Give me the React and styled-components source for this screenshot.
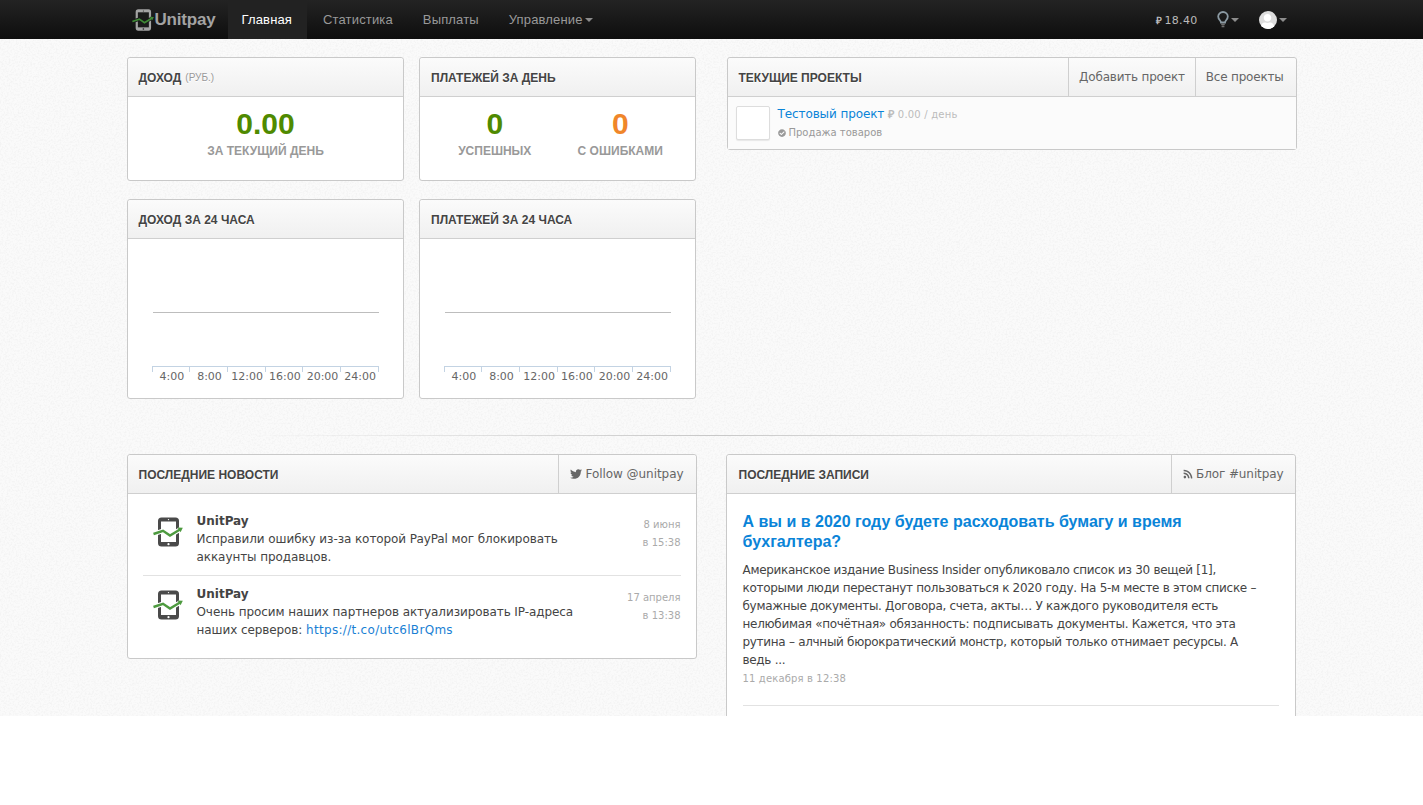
import React from "react";
import styled, { createGlobalStyle } from "styled-components";
import { FaTwitter, FaRss, FaCheckCircle, FaUser } from "react-icons/fa";

const noise = encodeURIComponent(
  `<svg xmlns="http://www.w3.org/2000/svg" width="256" height="256"><filter id="n" x="0" y="0" width="100%" height="100%"><feTurbulence type="fractalNoise" baseFrequency="0.55" numOctaves="3" stitchTiles="stitch"/><feColorMatrix values="0 0 0 0 0.55 0 0 0 0 0.55 0 0 0 0 0.55 2.2 0 0 0 -0.95"/></filter><rect width="256" height="256" filter="url(#n)" opacity="0.16"/></svg>`
);

const GlobalStyle = createGlobalStyle`
  html, body {
    margin: 0;
    padding: 0;
    background: #fff;
  }
  body {
    font-family: "DejaVu Sans", Verdana, sans-serif;
    font-size: 12px;
    color: #333;
  }
  * {
    box-sizing: border-box;
  }
`;

/* the textured page stops at 716px, the rest of the window stays white */
const Page = styled.div`
  height: 716px;
  overflow: hidden;
  background-color: #fafafa;
  background-image: url("data:image/svg+xml,${noise}");
`;

const NavBar = styled.div`
  height: 39px;
  background: linear-gradient(to bottom, #232323, #0e0e0e);
`;

const NavInner = styled.div`
  width: 1170px;
  margin: 0 auto;
  height: 39px;
  display: flex;
  align-items: center;
`;

const Brand = styled.div`
  width: 101px;
  padding-left: 5px;
  display: flex;
  align-items: center;
  gap: 1px;
  font-family: "Liberation Sans", Arial, sans-serif;
  font-weight: bold;
  font-size: 17px;
  letter-spacing: -0.2px;
  color: #a3a3a3;
`;

const NavLink = styled.div`
  height: 39px;
  padding: ${(p) => (p.$active ? "0 15px 0 14px" : "0 15px")};
  margin-right: ${(p) => (p.$active ? 1 : 0)}px;
  display: flex;
  align-items: center;
  font-family: "Liberation Sans", Arial, sans-serif;
  font-size: 13px;
  letter-spacing: 0.15px;
  color: ${(p) => (p.$active ? "#fff" : "#999")};
  background: ${(p) => (p.$active ? "#222" : "transparent")};
`;

const Caret = styled.span`
  display: inline-block;
  width: 0;
  height: 0;
  margin-left: ${(p) => p.$gap || 2}px;
  border-left: 4px solid transparent;
  border-right: 4px solid transparent;
  border-top: 4px solid #8c8c8c;
`;

const NavRight = styled.div`
  margin-left: auto;
  display: flex;
  align-items: center;
  padding-right: 10px;
`;

const Balance = styled.div`
  display: flex;
  align-items: baseline;
  gap: 2px;
  font-size: 11px;
  letter-spacing: 0.3px;
  color: #bbb;
  margin-right: 19px;
`;

const RubleSign = styled.span`
  font-family: "Liberation Sans", Arial, sans-serif;
  font-weight: bold;
  font-size: ${(p) => p.$size || 10}px;
`;

const NavIcon = styled.div`
  display: flex;
  align-items: center;
  color: #999;
  margin-right: ${(p) => p.$mr || 0}px;
`;

const Avatar = styled.div`
  width: 18px;
  height: 18px;
  border-radius: 50%;
  background: #ddd;
  overflow: hidden;
  display: flex;
  align-items: flex-end;
  justify-content: center;
  color: #fff;
`;

const Container = styled.div`
  width: 1170px;
  margin: 0 auto;
`;

const TopRow = styled.div`
  display: flex;
  justify-content: space-between;
  padding-top: 18px;
`;

const StatsGrid = styled.div`
  width: 569px;
  display: grid;
  grid-template-columns: 277px 277px;
  column-gap: 15px;
  row-gap: 18px;
`;

const Card = styled.div`
  background: ${(p) => p.$bg || "#fff"};
  border: 1px solid #c9c9c9;
  border-radius: 3px;
  width: ${(p) => p.$w || "auto"};
  height: ${(p) => p.$h || "auto"};
`;

const CardHead = styled.div`
  height: 39px;
  display: flex;
  align-items: stretch;
  border-bottom: 1px solid #cfcfcf;
  background: linear-gradient(to bottom, #fbfbfb, #f0f0f0);
  border-radius: 3px 3px 0 0;
`;

const CardTitle = styled.div`
  flex: 1;
  padding: 1px 0 0 ${(p) => p.$pl || 11}px;
  display: flex;
  align-items: center;
  font-family: "Liberation Sans", Arial, sans-serif;
  font-size: 12px;
  font-weight: bold;
  color: #444;
  text-shadow: 0 1px 0 #fff;
`;

const TitleNote = styled.span`
  font-weight: normal;
  font-size: 10px;
  color: #999;
  margin-left: 4px;
`;

const HeadAction = styled.div`
  padding: 0 ${(p) => p.$pr || 11}px 0 ${(p) => p.$pl || 11}px;
  display: flex;
  align-items: center;
  gap: 3px;
  border-left: 1px solid #cfcfcf;
  color: #666;
  font-size: 12px;
  letter-spacing: ${(p) => p.$ls ?? -0.2}px;
`;

const StatBody = styled.div`
  height: 83px;
  padding: 0 11.5px 0 12.5px;
  display: flex;
`;

const Stat = styled.div`
  flex: 1;
  text-align: center;
  font-family: "Liberation Sans", Arial, sans-serif;
`;

const StatValue = styled.div`
  font-size: 30px;
  font-weight: bold;
  line-height: 36px;
  margin-top: 9px;
  color: ${(p) => p.$color};
`;

const StatLabel = styled.div`
  font-size: 12px;
  font-weight: bold;
  color: #999;
  margin-top: 2px;
`;

const ChartBody = styled.div`
  height: 159px;
  padding: 73px 24px 0 25px;
`;

const BaseLine = styled.div`
  height: 1px;
  background: #bdbdbd;
`;

const Axis = styled.div`
  margin: 53px 0 0 -1px;
  display: grid;
  grid-template-columns: repeat(6, 1fr);
  border-top: 1px solid #c3d3e3;
  border-right: 1px solid #c3d3e3;
`;

const Tick = styled.div`
  border-left: 1px solid #c3d3e3;
  height: 5px;
  position: relative;
`;

const TickLabel = styled.span`
  position: absolute;
  top: 3px;
  left: 2px;
  right: 0;
  text-align: center;
  font-size: 11px;
  line-height: 14px;
  color: #666;
`;

const ProjectRow = styled.div`
  height: 52px;
  padding: 9px 8px;
  display: flex;
  gap: 8px;
  background: #fbfbfb;
`;

const Thumb = styled.div`
  width: 34px;
  height: 34px;
  background: #fff;
  border: 1px solid #ddd;
  border-radius: 2px;
  box-shadow: 0 1px 1px rgba(0, 0, 0, 0.08);
`;

const ProjectName = styled.div`
  font-size: 12px;
  line-height: 16px;
  letter-spacing: -0.1px;
  color: #0a84d8;
`;

const ProjectRate = styled.span`
  font-size: 10px;
  letter-spacing: 0.2px;
  color: #bbb;
  margin-left: 4px;
`;

const ProjectType = styled.div`
  margin-top: 4px;
  display: flex;
  align-items: center;
  gap: 3px;
  font-size: 10px;
  line-height: 12px;
  color: #999;
`;

const Divider = styled.div`
  height: 1px;
  margin: 36px 0 18px;
  background: linear-gradient(to right, rgba(0, 0, 0, 0) 10%, #c8c8c8 50%, rgba(0, 0, 0, 0) 90%);
`;

const BottomRow = styled.div`
  display: flex;
  gap: 29px;
  align-items: flex-start;
`;

const NewsList = styled.div`
  padding: 9px 15px 0;
  height: 164px;
`;

const NewsItem = styled.div`
  display: flex;
  height: 73px;
  padding-top: 9px;
  border-bottom: ${(p) => (p.$line ? "1px solid #e2e2e2" : "none")};
`;

const NewsIcon = styled.div`
  width: 54px;
  flex: none;
  padding: 5px 0 0 10px;
`;

const NewsText = styled.div`
  flex: 1;
  font-size: 12px;
  line-height: 18px;
  letter-spacing: -0.08px;
  color: #444;
`;

const NewsAuthor = styled.div`
  font-weight: bold;
  line-height: 18px;
  letter-spacing: 0;
  color: #444;
`;

const NewsLink = styled.span`
  letter-spacing: 0.3px;
  color: #1a7fd4;
`;

const NewsDate = styled.div`
  width: 70px;
  flex: none;
  padding-top: 4px;
  text-align: right;
  font-size: 10px;
  line-height: 18px;
  color: #aaa;
`;

const BlogBody = styled.div`
  padding: 18px 16px 0;
  height: 300px;
`;

const BlogTitle = styled.div`
  font-family: "Liberation Sans", Arial, sans-serif;
  font-size: 16px;
  font-weight: bold;
  line-height: 20px;
  color: #0a84d8;
`;

const BlogText = styled.div`
  margin-top: 9px;
  max-width: 525px;
  font-size: 12px;
  line-height: 18px;
  letter-spacing: -0.3px;
  color: #444;
`;

const BlogDate = styled.div`
  margin-top: 3px;
  font-size: 10px;
  line-height: 14px;
  letter-spacing: 0.15px;
  color: #aaa;
`;

const BlogRule = styled.div`
  height: 1px;
  margin-top: 19px;
  background: #e2e2e2;
`;

/* phone with the green trend line, used for the brand and the news avatars */
const PhoneLogo = ({ size = 30, body = "#4a4a4a", screen = "#fff", halo = "#fff", green = "#4d9a3f" }) => (
  <svg width={size} height={size} viewBox="0 0 30 30" style={{ flex: "none" }}>
    <rect x="5" y="0.5" width="21" height="29" rx="3.5" fill={body} />
    <rect x="8" y="4.5" width="15" height="20.5" fill={screen} />
    <circle cx="15.5" cy="2.6" r="0.7" fill={screen} />
    <circle cx="15.5" cy="27.2" r="1.1" fill={screen} />
    <path d="M0.5 17 L10 13.8 L17 18.6 L27 12.5" fill="none" stroke={halo} strokeWidth="4.5" />
    <path d="M0.5 17 L10 13.8 L17 18.6 L27 12.5" fill="none" stroke={green} strokeWidth="2.4" />
    <path d="M24.5 10.5 L29.8 10.8 L27.6 15.2 Z" fill={green} />
  </svg>
);

const BulbIcon = () => (
  <svg width="12" height="17" viewBox="0 0 12 17">
    <path
      d="M4 11.5 C4 9.5 1.2 8.8 1.2 5.6 C1.2 2.9 3.3 1 6 1 C8.7 1 10.8 2.9 10.8 5.6 C10.8 8.8 8 9.5 8 11.5 Z"
      fill="none"
      stroke="#8b9aa3"
      strokeWidth="1.8"
    />
    <path d="M4.2 13.2 H7.8 M4.6 15.4 H7.4" stroke="#6f6f6f" strokeWidth="1.6" />
  </svg>
);

const HOURS = ["4:00", "8:00", "12:00", "16:00", "20:00", "24:00"];

const Chart = () => (
  <ChartBody>
    <BaseLine />
    <Axis>
      {HOURS.map((h) => (
        <Tick key={h}>
          <TickLabel>{h}</TickLabel>
        </Tick>
      ))}
    </Axis>
  </ChartBody>
);

const App = () => (
  <Page>
    <GlobalStyle />
    <NavBar>
      <NavInner>
        <Brand>
          <PhoneLogo size={22} body="#a3a3a3" screen="#1a1a1a" halo="#1a1a1a" green="#3f8a35" />
          Unitpay
        </Brand>
        <NavLink $active>Главная</NavLink>
        <NavLink>Статистика</NavLink>
        <NavLink>Выплаты</NavLink>
        <NavLink>
          Управление
          <Caret />
        </NavLink>
        <NavRight>
          <Balance>
            <RubleSign>₽</RubleSign>
            <span>18.40</span>
          </Balance>
          <NavIcon $mr={20}>
            <BulbIcon />
            <Caret />
          </NavIcon>
          <NavIcon>
            <Avatar>
              <FaUser size={15} />
            </Avatar>
            <Caret />
          </NavIcon>
        </NavRight>
      </NavInner>
    </NavBar>

    <Container>
      <TopRow>
        <StatsGrid>
          <Card>
            <CardHead>
              <CardTitle>
                ДОХОД <TitleNote>(РУБ.)</TitleNote>
              </CardTitle>
            </CardHead>
            <StatBody>
              <Stat>
                <StatValue $color="#4f8a00">0.00</StatValue>
                <StatLabel>ЗА ТЕКУЩИЙ ДЕНЬ</StatLabel>
              </Stat>
            </StatBody>
          </Card>
          <Card>
            <CardHead>
              <CardTitle $pl={11.5}>ПЛАТЕЖЕЙ ЗА ДЕНЬ</CardTitle>
            </CardHead>
            <StatBody>
              <Stat>
                <StatValue $color="#4f8a00">0</StatValue>
                <StatLabel>УСПЕШНЫХ</StatLabel>
              </Stat>
              <Stat>
                <StatValue $color="#f0862a">0</StatValue>
                <StatLabel>С ОШИБКАМИ</StatLabel>
              </Stat>
            </StatBody>
          </Card>
          <Card>
            <CardHead>
              <CardTitle>ДОХОД ЗА 24 ЧАСА</CardTitle>
            </CardHead>
            <Chart />
          </Card>
          <Card>
            <CardHead>
              <CardTitle $pl={11.5}>ПЛАТЕЖЕЙ ЗА 24 ЧАСА</CardTitle>
            </CardHead>
            <Chart />
          </Card>
        </StatsGrid>

        <Card $w="570px" $h="93px" $bg="#fbfbfb">
          <CardHead>
            <CardTitle>ТЕКУЩИЕ ПРОЕКТЫ</CardTitle>
            <HeadAction $pl={10} $pr={10}>Добавить проект</HeadAction>
            <HeadAction $pl={10} $pr={12}>Все проекты</HeadAction>
          </CardHead>
          <ProjectRow>
            <Thumb />
            <div>
              <ProjectName>
                Тестовый проект
                <ProjectRate>
                  <RubleSign $size={11}>₽</RubleSign> 0.00 / день
                </ProjectRate>
              </ProjectName>
              <ProjectType>
                <FaCheckCircle size={8} />
                Продажа товаров
              </ProjectType>
            </div>
          </ProjectRow>
        </Card>
      </TopRow>

      <Divider />

      <BottomRow>
        <Card $w="570px">
          <CardHead>
            <CardTitle>ПОСЛЕДНИЕ НОВОСТИ</CardTitle>
            <HeadAction $pr={12} $ls={-0.05}>
              <FaTwitter size={12} />
              Follow @unitpay
            </HeadAction>
          </CardHead>
          <NewsList>
            <NewsItem $line>
              <NewsIcon>
                <PhoneLogo />
              </NewsIcon>
              <NewsText>
                <NewsAuthor>UnitPay</NewsAuthor>
                Исправили ошибку из-за которой PayPal мог блокировать аккаунты продавцов.
              </NewsText>
              <NewsDate>
                8 июня
                <br />в 15:38
              </NewsDate>
            </NewsItem>
            <NewsItem>
              <NewsIcon>
                <PhoneLogo />
              </NewsIcon>
              <NewsText>
                <NewsAuthor>UnitPay</NewsAuthor>
                Очень просим наших партнеров актуализировать IP-адреса наших серверов:{" "}
                <NewsLink>https://t.co/utc6lBrQms</NewsLink>
              </NewsText>
              <NewsDate>
                17 апреля
                <br />в 13:38
              </NewsDate>
            </NewsItem>
          </NewsList>
        </Card>

        <Card $w="570px">
          <CardHead>
            <CardTitle $pl={12}>ПОСЛЕДНИЕ ЗАПИСИ</CardTitle>
            <HeadAction $ls={-0.1}>
              <FaRss size={10} />
              Блог #unitpay
            </HeadAction>
          </CardHead>
          <BlogBody>
            <BlogTitle>А вы и в 2020 году будете расходовать бумагу и время бухгалтера?</BlogTitle>
            <BlogText>
              Американское издание Business Insider опубликовало список из 30 вещей [1], которыми люди
              перестанут пользоваться к 2020 году. На 5-м месте в этом списке – бумажные документы.
              Договора, счета, акты… У каждого руководителя есть нелюбимая «почётная» обязанность:
              подписывать документы. Кажется, что эта рутина – алчный бюрократический монстр, который
              только отнимает ресурсы. А ведь ...
            </BlogText>
            <BlogDate>11 декабря в 12:38</BlogDate>
            <BlogRule />
          </BlogBody>
        </Card>
      </BottomRow>
    </Container>
  </Page>
);

export default App;
